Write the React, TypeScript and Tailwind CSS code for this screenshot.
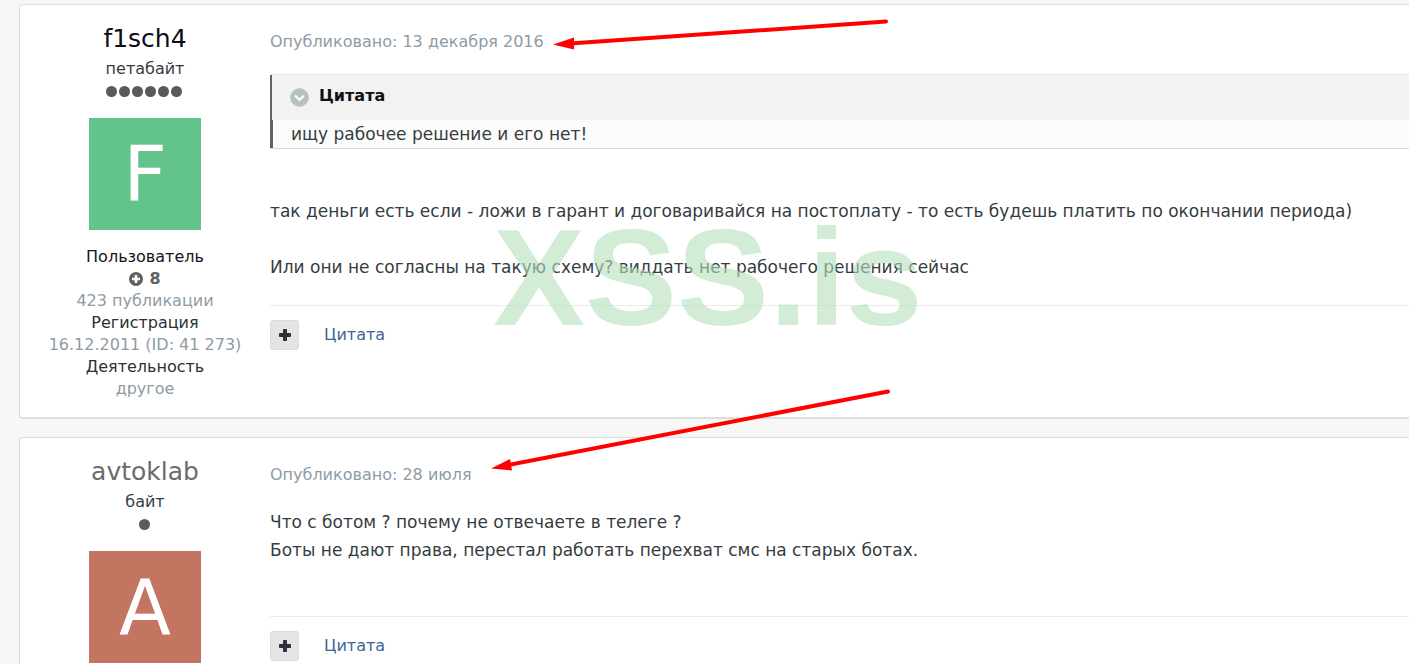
import type { ReactNode } from "react";

type Author = {
  name: string;
  nameClass: string;
  rank: string;
  pips: number;
  letter: string;
  avatarClass: string;
};

const FISCH: Author = {
  name: "f1sch4",
  nameClass: "text-[#0d0d14]",
  rank: "петабайт",
  pips: 6,
  letter: "F",
  avatarClass: "bg-[#62c48a]",
};

const AVTOKLAB: Author = {
  name: "avtoklab",
  nameClass: "text-[#6b6c69]",
  rank: "байт",
  pips: 1,
  letter: "A",
  avatarClass: "bg-[#c47562]",
};

function PlusIcon() {
  return (
    <svg className="h-3 w-3" viewBox="0 0 12 12" fill="currentColor" aria-hidden="true">
      <rect x="4" y="0" width="4" height="12" rx="0.8" />
      <rect x="0" y="4" width="12" height="4" rx="0.8" />
    </svg>
  );
}

function PlusCircleIcon() {
  return (
    <svg className="h-[14px] w-[14px]" viewBox="0 0 14 14" aria-hidden="true">
      <circle cx="7" cy="7" r="7" fill="currentColor" />
      <path d="M7 3v8M3 7h8" stroke="#ffffff" strokeWidth="2.6" />
    </svg>
  );
}

function ChevronIcon() {
  return (
    <svg className="h-[19px] w-[19px]" viewBox="0 0 19 19" aria-hidden="true">
      <circle cx="9.5" cy="9.5" r="9.3" fill="#b5c2b8" />
      <path d="M5 7.5l4.5 4.5L14 7.5" fill="none" stroke="#ffffff" strokeWidth="2.2" />
    </svg>
  );
}

function AuthorPane({ author, children }: { author: Author; children?: ReactNode }) {
  return (
    <aside className="flex w-[250px] shrink-0 flex-col items-center pt-4 pb-[17px] text-base leading-[22px] text-[#353c41]">
      <h3 className={`text-[25px] leading-[35px] ${author.nameClass}`}>
        <a href="#profile">{author.name}</a>
      </h3>
      <div className="mt-[2px]">{author.rank}</div>
      <div className="flex h-[22px] items-center gap-[2px] pr-[2px]">
        {Array.from({ length: author.pips }, (_, i) => (
          <span key={i} className="h-[11px] w-[11px] rounded-full bg-[#5a5a58]" />
        ))}
      </div>
      <a
        href="#profile"
        className={`mt-4 flex h-28 w-28 items-center justify-center pt-[2px] text-[76px] leading-none text-white ${author.avatarClass}`}
      >
        {author.letter}
      </a>
      {children}
    </aside>
  );
}

function PostActions() {
  return (
    <div className="flex items-center border-t border-[#ebebeb] pt-[14px]">
      <button
        type="button"
        aria-label="Мультицитата"
        className="flex h-[30px] w-[29px] items-center justify-center rounded-[3px] border border-[#dcdcdc] bg-[#e4e4e4] text-[#2d3038]"
      >
        <PlusIcon />
      </button>
      <a href="#quote" className="ml-[25px] text-base text-[#3d6594]">
        Цитата
      </a>
    </div>
  );
}

function Post({
  author,
  published,
  details,
  children,
}: {
  author: Author;
  published: string;
  details?: ReactNode;
  children: ReactNode;
}) {
  return (
    <article className="mb-[18px] ml-[19px] flex rounded-l-[4px] border border-r-0 border-b-2 border-[#dedede] bg-white">
      <AuthorPane author={author}>{details}</AuthorPane>
      <div className="min-w-0 flex-1 pt-[26px]">
        <a href="#post" className="block text-base leading-[22px] text-[#8e9ba5]">
          Опубликовано: {published}
        </a>
        {children}
        <PostActions />
      </div>
    </article>
  );
}

function Quote({ children }: { children: ReactNode }) {
  return (
    <blockquote className="border-y border-t-[#e8e8e8] border-b-[#d8d8d8]">
      <div className="flex h-[45px] items-center border-l-2 border-[#63665f] bg-[#f2f2f2] pb-1 pl-[18px]">
        <button type="button" aria-label="Свернуть" className="mt-[3px]">
          <ChevronIcon />
        </button>
        <span className="ml-[10px] text-base font-bold text-[#111111]">Цитата</span>
      </div>
      <div className="border-l-[3px] border-[#63665f] bg-[#fcfcfc] pl-[18px] leading-7">{children}</div>
    </blockquote>
  );
}

// Hand-drawn marks and the site stamp, laid over the posts
function Annotations() {
  return (
    <>
      <div className="pointer-events-none absolute top-[198px] left-[493px] font-['Liberation_Sans',Arial,sans-serif] text-[138px] leading-[158px] font-bold text-[#b4dfbb]/60">
        XSS.is
      </div>
      <svg className="pointer-events-none absolute top-0 left-0" width="900" height="480" aria-hidden="true">
        <g stroke="#ff0000" strokeWidth="4" strokeLinecap="round">
          <path d="M886 21.5 L570 43.5" />
          <path d="M888 391.5 L508 465" />
        </g>
        <g fill="#ff0000">
          <path d="M553 44.5 L574 37.5 L574 49.5 Z" />
          <path d="M491 468.5 L510 459 L512 470.5 Z" />
        </g>
      </svg>
    </>
  );
}

export default function App() {
  return (
    <main className="relative h-screen overflow-hidden bg-[#f7f7f7] pt-1 font-[Verdana,'DejaVu_Sans',sans-serif]">
      <Post
        author={FISCH}
        published="13 декабря 2016"
        details={
          <div className="mt-4 text-center text-[#8e9ba5]">
            <div className="text-[#15151c]">Пользователь</div>
            <div className="flex items-center justify-center gap-[6px] font-bold text-[#5f625c]">
              <PlusCircleIcon />8
            </div>
            <div>423 публикации</div>
            <div className="text-[#2b3136]">Регистрация</div>
            <div>16.12.2011 (ID: 41 273)</div>
            <div className="text-[#2b3136]">Деятельность</div>
            <div>другое</div>
          </div>
        }
      >
        <div className="mt-[21px] mb-6 text-[17px] leading-7 text-[#353c41]">
          <Quote>ищу рабочее решение и его нет!</Quote>
          <p className="mt-12">
            так деньги есть если - ложи в гарант и договаривайся на постоплату - то есть будешь платить по окончании
            периода)
          </p>
          <p className="mt-7">Или они не согласны на такую схему? виддать нет рабочего решения сейчас</p>
        </div>
      </Post>

      <Post author={AVTOKLAB} published="28 июля">
        <div className="mt-[22px] mb-[52px] text-[17px] leading-7 text-[#353c41]">
          <p>Что с ботом ? почему не отвечаете в телеге ?</p>
          <p>Боты не дают права, перестал работать перехват смс на старых ботах.</p>
        </div>
      </Post>

      <Annotations />
    </main>
  );
}
